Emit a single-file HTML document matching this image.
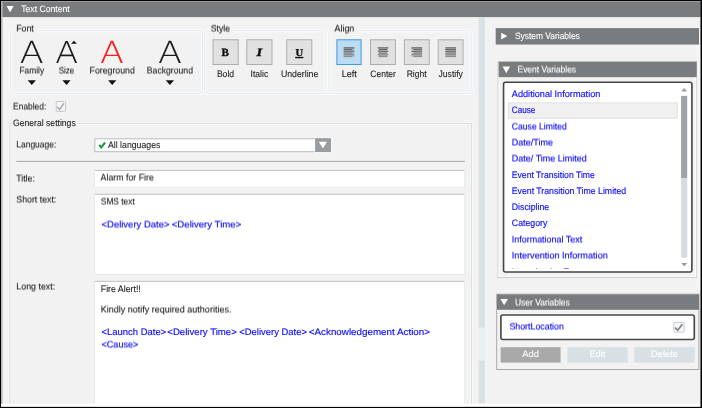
<!DOCTYPE html>
<html lang="en"><head><meta charset="utf-8"><title>Text Content</title>
<style>
html,body{margin:0;padding:0;background:#000;overflow:hidden}
body{width:702px;height:408px;font-family:"Liberation Sans",sans-serif}
svg{display:block;position:absolute;left:0;top:0;filter:blur(0.3px)}
text{white-space:pre}
</style></head><body>
<svg width="702" height="408" viewBox="0 0 702 408" font-family="'Liberation Sans', sans-serif" text-rendering="geometricPrecision">
<defs><filter id="h" x="0" y="0" width="702" height="408" filterUnits="userSpaceOnUse" color-interpolation-filters="sRGB"><feOffset dy="1" result="o"/><feComposite in="SourceGraphic" in2="o" operator="arithmetic" k2="0.5" k3="0.5"/></filter></defs>
<rect x="0.00" y="0.00" width="702.00" height="408.00" fill="#000" />
<rect x="1.10" y="1.00" width="699.50" height="405.90" fill="#c6c8ca" />
<rect x="2.80" y="17.00" width="697.80" height="387.00" fill="#f2f2f2" />
<rect x="2.50" y="1.00" width="698.10" height="16.10" fill="#787c7f" />
<rect x="2.50" y="1.00" width="698.10" height="1.00" fill="#9c9fa1" />
<polygon points="6.60,6.00 13.60,6.00 10.10,12.20" fill="#fff" />
<rect x="10.50" y="30.70" width="192.00" height="62.70" fill="none" stroke="#ffffff" stroke-width="3.0" rx="2.8" opacity="0.85"/>
<rect x="10.50" y="30.70" width="192.00" height="62.70" fill="none" stroke="#dfe7ee" stroke-width="1" rx="2.8" />
<rect x="14.20" y="27.70" width="22.10" height="6.00" fill="#f2f2f2" />
<rect x="204.60" y="30.70" width="121.30" height="62.70" fill="none" stroke="#ffffff" stroke-width="3.0" rx="2.8" opacity="0.85"/>
<rect x="204.60" y="30.70" width="121.30" height="62.70" fill="none" stroke="#dfe7ee" stroke-width="1" rx="2.8" />
<rect x="208.80" y="27.70" width="23.70" height="6.00" fill="#f2f2f2" />
<rect x="329.00" y="30.70" width="142.05" height="62.70" fill="none" stroke="#ffffff" stroke-width="3.0" rx="2.8" opacity="0.85"/>
<rect x="329.00" y="30.70" width="142.05" height="62.70" fill="none" stroke="#dfe7ee" stroke-width="1" rx="2.8" />
<rect x="332.50" y="27.70" width="24.30" height="6.00" fill="#f2f2f2" />
<g opacity="0.999"><text x="31.70" y="63.0" text-anchor="middle" textLength="24.0" lengthAdjust="spacingAndGlyphs" font-family="'DejaVu Sans Light', 'DejaVu Sans', sans-serif" font-weight="200" font-size="30.6" fill="#1a1a1a" stroke="#1a1a1a" stroke-width="0.1">A</text></g>
<g opacity="0.999"><text x="66.75" y="63.0" text-anchor="middle" textLength="22.9" lengthAdjust="spacingAndGlyphs" font-family="'DejaVu Sans Light', 'DejaVu Sans', sans-serif" font-weight="200" font-size="30.2" fill="#1a1a1a" stroke="#1a1a1a" stroke-width="0.1">A</text></g>
<polygon points="71.00,43.80 76.90,43.80 73.95,40.80" fill="#111" />
<g opacity="0.999"><text x="112.10" y="63.0" text-anchor="middle" textLength="24.0" lengthAdjust="spacingAndGlyphs" font-family="'DejaVu Sans Light', 'DejaVu Sans', sans-serif" font-weight="200" font-size="30.6" fill="#ff1a1a" stroke="#ff1a1a" stroke-width="0.1">A</text></g>
<g opacity="0.999"><text x="169.95" y="63.0" text-anchor="middle" textLength="24.0" lengthAdjust="spacingAndGlyphs" font-family="'DejaVu Sans Light', 'DejaVu Sans', sans-serif" font-weight="200" font-size="30.6" fill="#1a1a1a" stroke="#1a1a1a" stroke-width="0.1">A</text></g>
<polygon points="27.70,80.30 35.90,80.30 31.80,85.00" fill="#111" />
<polygon points="62.40,80.30 70.60,80.30 66.50,85.00" fill="#111" />
<polygon points="108.10,80.30 116.30,80.30 112.20,85.00" fill="#111" />
<polygon points="165.80,80.30 174.00,80.30 169.90,85.00" fill="#111" />
<rect x="213.00" y="39.80" width="25.20" height="24.70" fill="#e1e1e1" stroke="#adadad" stroke-width="1" />
<rect x="246.80" y="39.80" width="25.20" height="24.70" fill="#e1e1e1" stroke="#adadad" stroke-width="1" />
<rect x="286.70" y="39.80" width="25.10" height="24.70" fill="#e1e1e1" stroke="#adadad" stroke-width="1" />
<rect x="336.90" y="39.80" width="24.20" height="24.70" fill="#bcdcf4" stroke="#3f9ae0" stroke-width="1" />
<rect x="370.50" y="39.80" width="24.90" height="24.70" fill="#e1e1e1" stroke="#adadad" stroke-width="1" />
<rect x="404.40" y="39.80" width="24.80" height="24.70" fill="#e1e1e1" stroke="#adadad" stroke-width="1" />
<rect x="438.20" y="39.80" width="24.90" height="24.70" fill="#e1e1e1" stroke="#adadad" stroke-width="1" />
<rect x="343.70" y="47.30" width="10.60" height="9.80" fill="#8a8a8a" opacity="0.35"/>
<rect x="343.70" y="47.30" width="10.60" height="1.20" fill="#626262" />
<rect x="343.70" y="49.02" width="8.60" height="1.20" fill="#6b6b6b" />
<rect x="343.70" y="50.74" width="10.60" height="1.20" fill="#747474" />
<rect x="343.70" y="52.46" width="8.60" height="1.20" fill="#7d7d7d" />
<rect x="343.70" y="54.18" width="10.60" height="1.20" fill="#868686" />
<rect x="343.70" y="55.90" width="8.60" height="1.20" fill="#8f8f8f" />
<rect x="378.50" y="47.30" width="9.00" height="9.80" fill="#8a8a8a" opacity="0.35"/>
<rect x="377.70" y="47.30" width="10.60" height="1.20" fill="#626262" />
<rect x="378.70" y="49.02" width="8.60" height="1.20" fill="#6b6b6b" />
<rect x="377.70" y="50.74" width="10.60" height="1.20" fill="#747474" />
<rect x="378.70" y="52.46" width="8.60" height="1.20" fill="#7d7d7d" />
<rect x="377.70" y="54.18" width="10.60" height="1.20" fill="#868686" />
<rect x="378.70" y="55.90" width="8.60" height="1.20" fill="#8f8f8f" />
<rect x="411.50" y="47.30" width="10.60" height="9.80" fill="#8a8a8a" opacity="0.35"/>
<rect x="411.50" y="47.30" width="10.60" height="1.20" fill="#626262" />
<rect x="413.50" y="49.02" width="8.60" height="1.20" fill="#6b6b6b" />
<rect x="411.50" y="50.74" width="10.60" height="1.20" fill="#747474" />
<rect x="413.50" y="52.46" width="8.60" height="1.20" fill="#7d7d7d" />
<rect x="411.50" y="54.18" width="10.60" height="1.20" fill="#868686" />
<rect x="413.50" y="55.90" width="8.60" height="1.20" fill="#8f8f8f" />
<rect x="445.40" y="47.30" width="10.60" height="9.80" fill="#8a8a8a" opacity="0.35"/>
<rect x="445.40" y="47.30" width="10.60" height="1.20" fill="#626262" />
<rect x="445.40" y="49.02" width="10.60" height="1.20" fill="#6b6b6b" />
<rect x="445.40" y="50.74" width="10.60" height="1.20" fill="#747474" />
<rect x="445.40" y="52.46" width="10.60" height="1.20" fill="#7d7d7d" />
<rect x="445.40" y="54.18" width="10.60" height="1.20" fill="#868686" />
<rect x="445.40" y="55.90" width="10.60" height="1.20" fill="#8f8f8f" />
<rect x="56.20" y="101.50" width="9.30" height="9.80" fill="#f8f8f8" stroke="#c4c7ca" stroke-width="1" rx="0.8" />
<polyline points="57.25,106.72 59.61,109.42 63.94,103.27" fill="none" stroke="#a6abaf" stroke-width="1.5"/>
<rect x="9.80" y="123.40" width="461.50" height="288.60" fill="none" stroke="#ffffff" stroke-width="2.6" opacity="0.7"/>
<rect x="9.80" y="123.40" width="461.50" height="288.60" fill="none" stroke="#d9d9d9" stroke-width="1" />
<rect x="11.50" y="119.00" width="67.00" height="8.00" fill="#f2f2f2" />
<rect x="94.80" y="138.80" width="235.70" height="12.90" fill="#fff" stroke="#b9bbbd" stroke-width="1" />
<rect x="314.30" y="137.40" width="17.70" height="15.60" fill="#fff" opacity="0.6"/>
<rect x="315.10" y="138.20" width="15.90" height="13.80" fill="#999da0" />
<polygon points="318.70,141.70 327.00,141.70 322.85,148.20" fill="#fff" />
<polyline points="99.3,144.9 101.3,147.3 105.0,142.7" fill="none" stroke="#15983a" stroke-width="2.1"/>
<line x1="16.30" y1="161.40" x2="464.80" y2="161.40" stroke="#a6a6a6" stroke-width="1" />
<rect x="94.20" y="170.00" width="370.70" height="17.50" fill="#e4e9f0" rx="1.2" />
<rect x="95.00" y="170.30" width="369.10" height="16.50" fill="#fff" rx="0.6" />
<line x1="94.80" y1="170.45" x2="464.30" y2="170.45" stroke="#b7bbc0" stroke-width="0.9" />
<rect x="94.20" y="193.80" width="370.70" height="80.90" fill="#e4e9f0" rx="1.2" />
<rect x="95.00" y="194.10" width="369.10" height="79.90" fill="#fff" rx="0.6" />
<line x1="94.80" y1="194.25" x2="464.30" y2="194.25" stroke="#b7bbc0" stroke-width="0.9" />
<rect x="94.20" y="280.90" width="370.70" height="131.60" fill="#e4e9f0" rx="1.2" />
<rect x="95.00" y="281.20" width="369.10" height="130.60" fill="#fff" rx="0.6" />
<line x1="94.80" y1="281.35" x2="464.30" y2="281.35" stroke="#b7bbc0" stroke-width="0.9" />
<rect x="478.60" y="17.10" width="6.30" height="310.60" fill="#dae1e6" />
<rect x="478.60" y="327.70" width="6.30" height="32.90" fill="#eceff1" />
<rect x="478.60" y="360.60" width="6.30" height="42.80" fill="#dae1e6" />
<rect x="495.70" y="28.10" width="203.30" height="16.45" fill="#787c7f" />
<polygon points="501.20,32.70 507.40,36.10 501.20,39.60" fill="#fff" />
<rect x="498.00" y="61.60" width="198.70" height="215.90" fill="#f2f2f2" stroke="#cdcdcd" stroke-width="1" />
<rect x="499.00" y="62.60" width="196.70" height="213.90" fill="none" stroke="#ffffff" stroke-width="1" opacity="0.75"/>
<rect x="697.40" y="45.00" width="3.20" height="245.00" fill="#f6f6f6" />
<rect x="498.60" y="61.80" width="198.10" height="15.35" fill="#787c7f" />
<polygon points="502.60,66.50 510.00,66.50 506.30,73.20" fill="#fff" />
<rect x="503.55" y="82.30" width="188.35" height="189.70" fill="#fff" stroke="#444444" stroke-width="1.6" rx="2" />
<rect x="508.40" y="102.90" width="168.90" height="15.30" fill="#f0f0f0" stroke="#e0e0e0" stroke-width="1" />
<clipPath id="lc"><rect x="505" y="262" width="170" height="6.7"/></clipPath>
<g clip-path="url(#lc)">
<text x="511.80" y="274.65" fill="#0a0aff" stroke="#0a0aff" stroke-width="0.1" font-size="9.3" textLength="92.00" lengthAdjust="spacingAndGlyphs" >Investigative Treatment</text>
</g>
<rect x="681.10" y="95.90" width="6.10" height="82.30" fill="#a0a4a7" />
<rect x="681.10" y="178.20" width="6.20" height="79.50" fill="#d4dce0" />
<polygon points="681.20,91.40 687.20,91.40 684.20,88.10" fill="#989ea2" />
<polygon points="681.20,263.00 687.30,263.00 684.25,266.40" fill="#989ea2" />
<rect x="496.70" y="294.20" width="202.20" height="75.30" fill="#f2f2f2" stroke="#a8a8a8" stroke-width="1" />
<rect x="497.00" y="294.40" width="202.00" height="15.40" fill="#787c7f" />
<polygon points="500.50,299.00 508.00,299.00 504.20,305.30" fill="#fff" />
<rect x="500.90" y="315.00" width="193.40" height="24.50" fill="#fff" stroke="#444444" stroke-width="1.6" rx="2" />
<rect x="673.80" y="322.40" width="10.40" height="9.80" fill="#f8f8f8" stroke="#c9ccd0" stroke-width="1" rx="0.8" />
<polyline points="675.01,327.62 677.63,330.32 682.42,324.17" fill="none" stroke="#7d8489" stroke-width="1.6"/>
<rect x="500.60" y="347.20" width="60.00" height="15.40" fill="#a9a9a9" />
<rect x="567.40" y="347.20" width="60.30" height="15.50" fill="#d8e0e4" />
<rect x="634.30" y="347.20" width="60.30" height="15.50" fill="#d8e0e4" />
<g><text x="21.20" y="12.00" fill="#fff" stroke="#fff" stroke-width="0.1" font-size="9.3" textLength="48.50" lengthAdjust="spacingAndGlyphs" >Text Content</text>
<text x="225.20" y="56.00" fill="#0c0c0c" stroke="#0c0c0c" stroke-width="0.35" font-size="11" text-anchor="middle" font-family="'Liberation Serif', serif" font-weight="bold">B</text>
<text x="259.20" y="56.00" fill="#0c0c0c" stroke="#0c0c0c" stroke-width="0.35" font-size="11" text-anchor="middle" textLength="5.60" lengthAdjust="spacingAndGlyphs" font-family="'Liberation Serif', serif" font-weight="bold" font-style="italic">I</text>
<text x="299.30" y="56.00" fill="#0c0c0c" stroke="#0c0c0c" stroke-width="0.3" font-size="10.6" text-anchor="middle" font-family="'Liberation Serif', serif" font-weight="bold" text-decoration="underline">U</text>
<text x="216.90" y="77.00" fill="#1e1e1e" stroke="#1e1e1e" stroke-width="0.1" font-size="9.3" textLength="17.20" lengthAdjust="spacingAndGlyphs" >Bold</text>
<text x="250.60" y="77.00" fill="#1e1e1e" stroke="#1e1e1e" stroke-width="0.1" font-size="9.3" textLength="17.60" lengthAdjust="spacingAndGlyphs" >Italic</text>
<text x="280.90" y="77.00" fill="#1e1e1e" stroke="#1e1e1e" stroke-width="0.1" font-size="9.3" textLength="37.40" lengthAdjust="spacingAndGlyphs" >Underline</text>
<text x="341.70" y="77.00" fill="#1e1e1e" stroke="#1e1e1e" stroke-width="0.1" font-size="9.3" textLength="15.20" lengthAdjust="spacingAndGlyphs" >Left</text>
<text x="370.30" y="77.00" fill="#1e1e1e" stroke="#1e1e1e" stroke-width="0.1" font-size="9.3" textLength="25.60" lengthAdjust="spacingAndGlyphs" >Center</text>
<text x="406.70" y="77.00" fill="#1e1e1e" stroke="#1e1e1e" stroke-width="0.1" font-size="9.3" textLength="20.00" lengthAdjust="spacingAndGlyphs" >Right</text>
<text x="438.60" y="77.00" fill="#1e1e1e" stroke="#1e1e1e" stroke-width="0.1" font-size="9.3" textLength="24.20" lengthAdjust="spacingAndGlyphs" >Justify</text>
<text x="13.10" y="126.00" fill="#1e1e1e" stroke="#1e1e1e" stroke-width="0.1" font-size="9.3" textLength="62.60" lengthAdjust="spacingAndGlyphs" >General settings</text>
<text x="108.00" y="148.00" fill="#1e1e1e" stroke="#1e1e1e" stroke-width="0.1" font-size="9.3" textLength="52.40" lengthAdjust="spacingAndGlyphs" >All languages</text>
<text x="100.80" y="292.00" fill="#1e1e1e" stroke="#1e1e1e" stroke-width="0.1" font-size="9.3" textLength="40.00" lengthAdjust="spacingAndGlyphs" >Fire Alert!!</text>
<text x="101.50" y="335.00" fill="#0a0aff" stroke="#0a0aff" stroke-width="0.14" font-size="9.3" textLength="64.80" lengthAdjust="spacingAndGlyphs" >&lt;Launch Date&gt;</text>
<text x="167.30" y="335.00" fill="#0a0aff" stroke="#0a0aff" stroke-width="0.14" font-size="9.3" textLength="69.50" lengthAdjust="spacingAndGlyphs" >&lt;Delivery Time&gt;</text>
<text x="239.30" y="335.00" fill="#0a0aff" stroke="#0a0aff" stroke-width="0.14" font-size="9.3" textLength="67.60" lengthAdjust="spacingAndGlyphs" >&lt;Delivery Date&gt;</text>
<text x="308.80" y="335.00" fill="#0a0aff" stroke="#0a0aff" stroke-width="0.14" font-size="9.3" textLength="121.20" lengthAdjust="spacingAndGlyphs" >&lt;Acknowledgement Action&gt;</text>
<text x="515.00" y="39.00" fill="#fff" stroke="#fff" stroke-width="0.1" font-size="9.3" textLength="64.80" lengthAdjust="spacingAndGlyphs" >System Variables</text>
<text x="511.80" y="97.00" fill="#0a0aff" stroke="#0a0aff" stroke-width="0.14" font-size="9.3" textLength="88.60" lengthAdjust="spacingAndGlyphs" >Additional Information</text>
<text x="511.80" y="113.00" fill="#0a0aff" stroke="#0a0aff" stroke-width="0.14" font-size="9.3" textLength="23.50" lengthAdjust="spacingAndGlyphs" >Cause</text>
<text x="511.80" y="178.00" fill="#0a0aff" stroke="#0a0aff" stroke-width="0.14" font-size="9.3" textLength="83.00" lengthAdjust="spacingAndGlyphs" >Event Transition Time</text>
<text x="511.80" y="194.00" fill="#0a0aff" stroke="#0a0aff" stroke-width="0.14" font-size="9.3" textLength="114.40" lengthAdjust="spacingAndGlyphs" >Event Transition Time Limited</text>
<text x="511.80" y="210.00" fill="#0a0aff" stroke="#0a0aff" stroke-width="0.14" font-size="9.3" textLength="37.40" lengthAdjust="spacingAndGlyphs" >Discipline</text>
<text x="511.80" y="226.00" fill="#0a0aff" stroke="#0a0aff" stroke-width="0.14" font-size="9.3" textLength="35.60" lengthAdjust="spacingAndGlyphs" >Category</text>
<text x="530.60" y="357.00" fill="#fff" stroke="#fff" stroke-width="0.1" font-size="9.3" text-anchor="middle" >Add</text>
<text x="597.40" y="357.00" fill="#fff" stroke="#fff" stroke-width="0.1" font-size="9.3" text-anchor="middle" >Edit</text>
<text x="664.50" y="357.00" fill="#fff" stroke="#fff" stroke-width="0.1" font-size="9.3" text-anchor="middle" >Delete</text></g>
<g filter="url(#h)"><text x="16.20" y="31.00" fill="#1e1e1e" stroke="#1e1e1e" stroke-width="0.1" font-size="9.3" textLength="17.60" lengthAdjust="spacingAndGlyphs" >Font</text>
<text x="210.80" y="31.00" fill="#1e1e1e" stroke="#1e1e1e" stroke-width="0.1" font-size="9.3" textLength="19.20" lengthAdjust="spacingAndGlyphs" >Style</text>
<text x="334.50" y="31.00" fill="#1e1e1e" stroke="#1e1e1e" stroke-width="0.1" font-size="9.3" textLength="19.80" lengthAdjust="spacingAndGlyphs" >Align</text>
<text x="19.50" y="73.00" fill="#1e1e1e" stroke="#1e1e1e" stroke-width="0.1" font-size="9.3" textLength="24.60" lengthAdjust="spacingAndGlyphs" >Family</text>
<text x="58.80" y="73.00" fill="#1e1e1e" stroke="#1e1e1e" stroke-width="0.1" font-size="9.3" textLength="15.40" lengthAdjust="spacingAndGlyphs" >Size</text>
<text x="89.60" y="73.00" fill="#1e1e1e" stroke="#1e1e1e" stroke-width="0.1" font-size="9.3" textLength="45.20" lengthAdjust="spacingAndGlyphs" >Foreground</text>
<text x="146.80" y="73.00" fill="#1e1e1e" stroke="#1e1e1e" stroke-width="0.1" font-size="9.3" textLength="46.20" lengthAdjust="spacingAndGlyphs" >Background</text>
<text x="13.10" y="109.00" fill="#1e1e1e" stroke="#1e1e1e" stroke-width="0.1" font-size="9.3" textLength="33.20" lengthAdjust="spacingAndGlyphs" >Enabled:</text>
<text x="16.30" y="147.00" fill="#1e1e1e" stroke="#1e1e1e" stroke-width="0.1" font-size="9.3" textLength="40.00" lengthAdjust="spacingAndGlyphs" >Language:</text>
<text x="16.20" y="181.00" fill="#1e1e1e" stroke="#1e1e1e" stroke-width="0.1" font-size="9.3" textLength="18.70" lengthAdjust="spacingAndGlyphs" >Title:</text>
<text x="100.60" y="180.00" fill="#1e1e1e" stroke="#1e1e1e" stroke-width="0.1" font-size="9.3" textLength="53.20" lengthAdjust="spacingAndGlyphs" >Alarm for Fire</text>
<text x="16.30" y="202.00" fill="#1e1e1e" stroke="#1e1e1e" stroke-width="0.1" font-size="9.3" textLength="40.00" lengthAdjust="spacingAndGlyphs" >Short text:</text>
<text x="100.80" y="204.00" fill="#1e1e1e" stroke="#1e1e1e" stroke-width="0.1" font-size="9.3" textLength="34.00" lengthAdjust="spacingAndGlyphs" >SMS text</text>
<text x="101.50" y="227.00" fill="#0a0aff" stroke="#0a0aff" stroke-width="0.14" font-size="9.3" textLength="68.00" lengthAdjust="spacingAndGlyphs" >&lt;Delivery Date&gt;</text>
<text x="171.70" y="227.00" fill="#0a0aff" stroke="#0a0aff" stroke-width="0.14" font-size="9.3" textLength="69.60" lengthAdjust="spacingAndGlyphs" >&lt;Delivery Time&gt;</text>
<text x="16.30" y="289.00" fill="#1e1e1e" stroke="#1e1e1e" stroke-width="0.1" font-size="9.3" textLength="38.90" lengthAdjust="spacingAndGlyphs" >Long text:</text>
<text x="100.80" y="312.00" fill="#1e1e1e" stroke="#1e1e1e" stroke-width="0.1" font-size="9.3" textLength="130.60" lengthAdjust="spacingAndGlyphs" >Kindly notify required authorities.</text>
<text x="101.50" y="347.00" fill="#0a0aff" stroke="#0a0aff" stroke-width="0.14" font-size="9.3" textLength="36.80" lengthAdjust="spacingAndGlyphs" >&lt;Cause&gt;</text>
<text x="517.50" y="72.00" fill="#fff" stroke="#fff" stroke-width="0.1" font-size="9.3" textLength="58.60" lengthAdjust="spacingAndGlyphs" >Event Variables</text>
<text x="511.80" y="129.00" fill="#0a0aff" stroke="#0a0aff" stroke-width="0.14" font-size="9.3" textLength="55.00" lengthAdjust="spacingAndGlyphs" >Cause Limited</text>
<text x="511.80" y="145.00" fill="#0a0aff" stroke="#0a0aff" stroke-width="0.14" font-size="9.3" textLength="41.20" lengthAdjust="spacingAndGlyphs" >Date/Time</text>
<text x="511.80" y="161.00" fill="#0a0aff" stroke="#0a0aff" stroke-width="0.14" font-size="9.3" textLength="75.00" lengthAdjust="spacingAndGlyphs" >Date/ Time Limited</text>
<text x="511.80" y="242.00" fill="#0a0aff" stroke="#0a0aff" stroke-width="0.14" font-size="9.3" textLength="70.40" lengthAdjust="spacingAndGlyphs" >Informational Text</text>
<text x="511.80" y="258.00" fill="#0a0aff" stroke="#0a0aff" stroke-width="0.14" font-size="9.3" textLength="96.00" lengthAdjust="spacingAndGlyphs" >Intervention Information</text>
<text x="515.00" y="305.00" fill="#fff" stroke="#fff" stroke-width="0.1" font-size="9.3" textLength="54.80" lengthAdjust="spacingAndGlyphs" >User Variables</text>
<text x="509.40" y="329.00" fill="#0a0aff" stroke="#0a0aff" stroke-width="0.14" font-size="9.3" textLength="54.50" lengthAdjust="spacingAndGlyphs" >ShortLocation</text></g>
<rect x="1.10" y="403.80" width="699.50" height="3.10" fill="#fff" />
<rect x="700.60" y="0.00" width="1.40" height="408.00" fill="#000" />
<rect x="0.00" y="406.90" width="702.00" height="1.10" fill="#000" />
<rect x="0.00" y="0.00" width="1.00" height="408.00" fill="#000" />
<rect x="0.00" y="0.00" width="702.00" height="1.00" fill="#000" />
</svg>
</body></html>
